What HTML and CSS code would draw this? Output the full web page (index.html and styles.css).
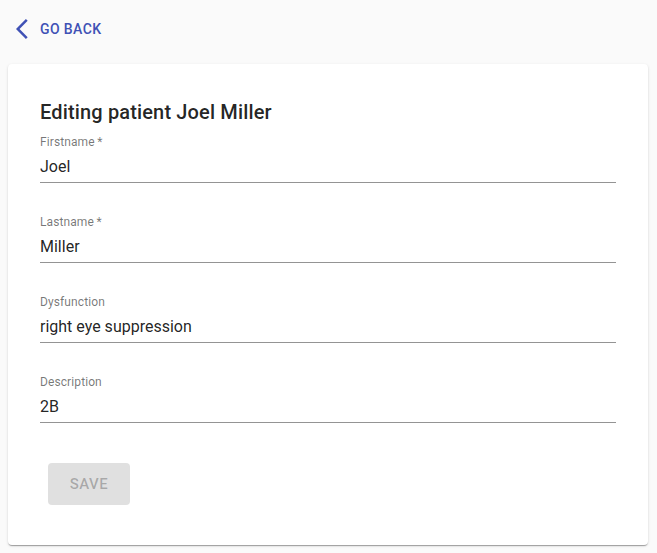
FILE: index.html
```html
<!DOCTYPE html>
<html>
<head>
<meta charset="utf-8">
<link rel="stylesheet" href="styles.css">
</head>
<body>
<div class="page">
  <div class="topbar">
    <button class="back">
      <svg class="back-icon" viewBox="0 0 24 24" width="24" height="24"><path d="M11.67 3.87L9.9 2.1 0 12l9.9 9.9 1.77-1.77L3.54 12z"/></svg>
      <span>Go back</span>
    </button>
  </div>
  <div class="card">
    <h2 class="title">Editing patient Joel Miller</h2>
    <div class="fields">
      <div class="field"><label>Firstname&thinsp;*</label><div class="input">Joel</div></div>
      <div class="field"><label>Lastname&thinsp;*</label><div class="input">Miller</div></div>
      <div class="field"><label>Dysfunction</label><div class="input">right eye suppression</div></div>
      <div class="field"><label>Description</label><div class="input">2B</div></div>
    </div>
    <button class="save" disabled>Save</button>
  </div>
</div>
</body>
</html>
```
FILE: styles.css
```css
* { box-sizing: border-box; }
html, body { margin: 0; padding: 0; background: #fafafa; }
body { font-family: Roboto, "Liberation Sans", sans-serif; }
.page { padding: 0 9px 8px 8px; }
.topbar { height: 64px; display: flex; align-items: flex-start; padding-top: 11px; }
.back {
  display: flex; align-items: center; border: 0; background: none; cursor: pointer;
  padding: 6px 8px; height: 36px;
  font-family: Roboto, "Liberation Sans", sans-serif;
  font-size: 14px; font-weight: 500; letter-spacing: 0.4px; text-transform: uppercase;
  color: #3f51b5;
}
.back-icon { fill: #3f51b5; width: 24px; height: 24px; flex: none; }
.card {
  background: #fff; border-radius: 4px;
  box-shadow: 0px 2px 1px -1px rgba(0,0,0,0.2), 0px 1px 1px 0px rgba(0,0,0,0.14), 0px 1px 3px 0px rgba(0,0,0,0.12);
  padding: 32px;
}
.title {
  margin: 0 0 7px; font-size: 20px; font-weight: 500; line-height: 32px;
  letter-spacing: 0.15px;
  color: rgba(0,0,0,0.87);
}
.fields { display: flex; flex-direction: column; gap: 32px; }
.field { position: relative; height: 48px; border-bottom: 1px solid rgba(0,0,0,0.42); }
.field label {
  display: block; font-size: 12px; line-height: 14px; color: rgba(0,0,0,0.54);
  letter-spacing: 0.1px;
}
.input {
  font-size: 16px; line-height: 19px; padding: 8px 0 6px; color: rgba(0,0,0,0.87);
}
.save {
  margin: 40px 8px 8px; display: block;
  width: 82px; height: 42px; border: 0; border-radius: 4px;
  background: #e0e0e0; color: rgba(0,0,0,0.26);
  font-family: Roboto, "Liberation Sans", sans-serif;
  font-size: 15px; font-weight: 500; letter-spacing: 0.46px; text-transform: uppercase;
}
```
